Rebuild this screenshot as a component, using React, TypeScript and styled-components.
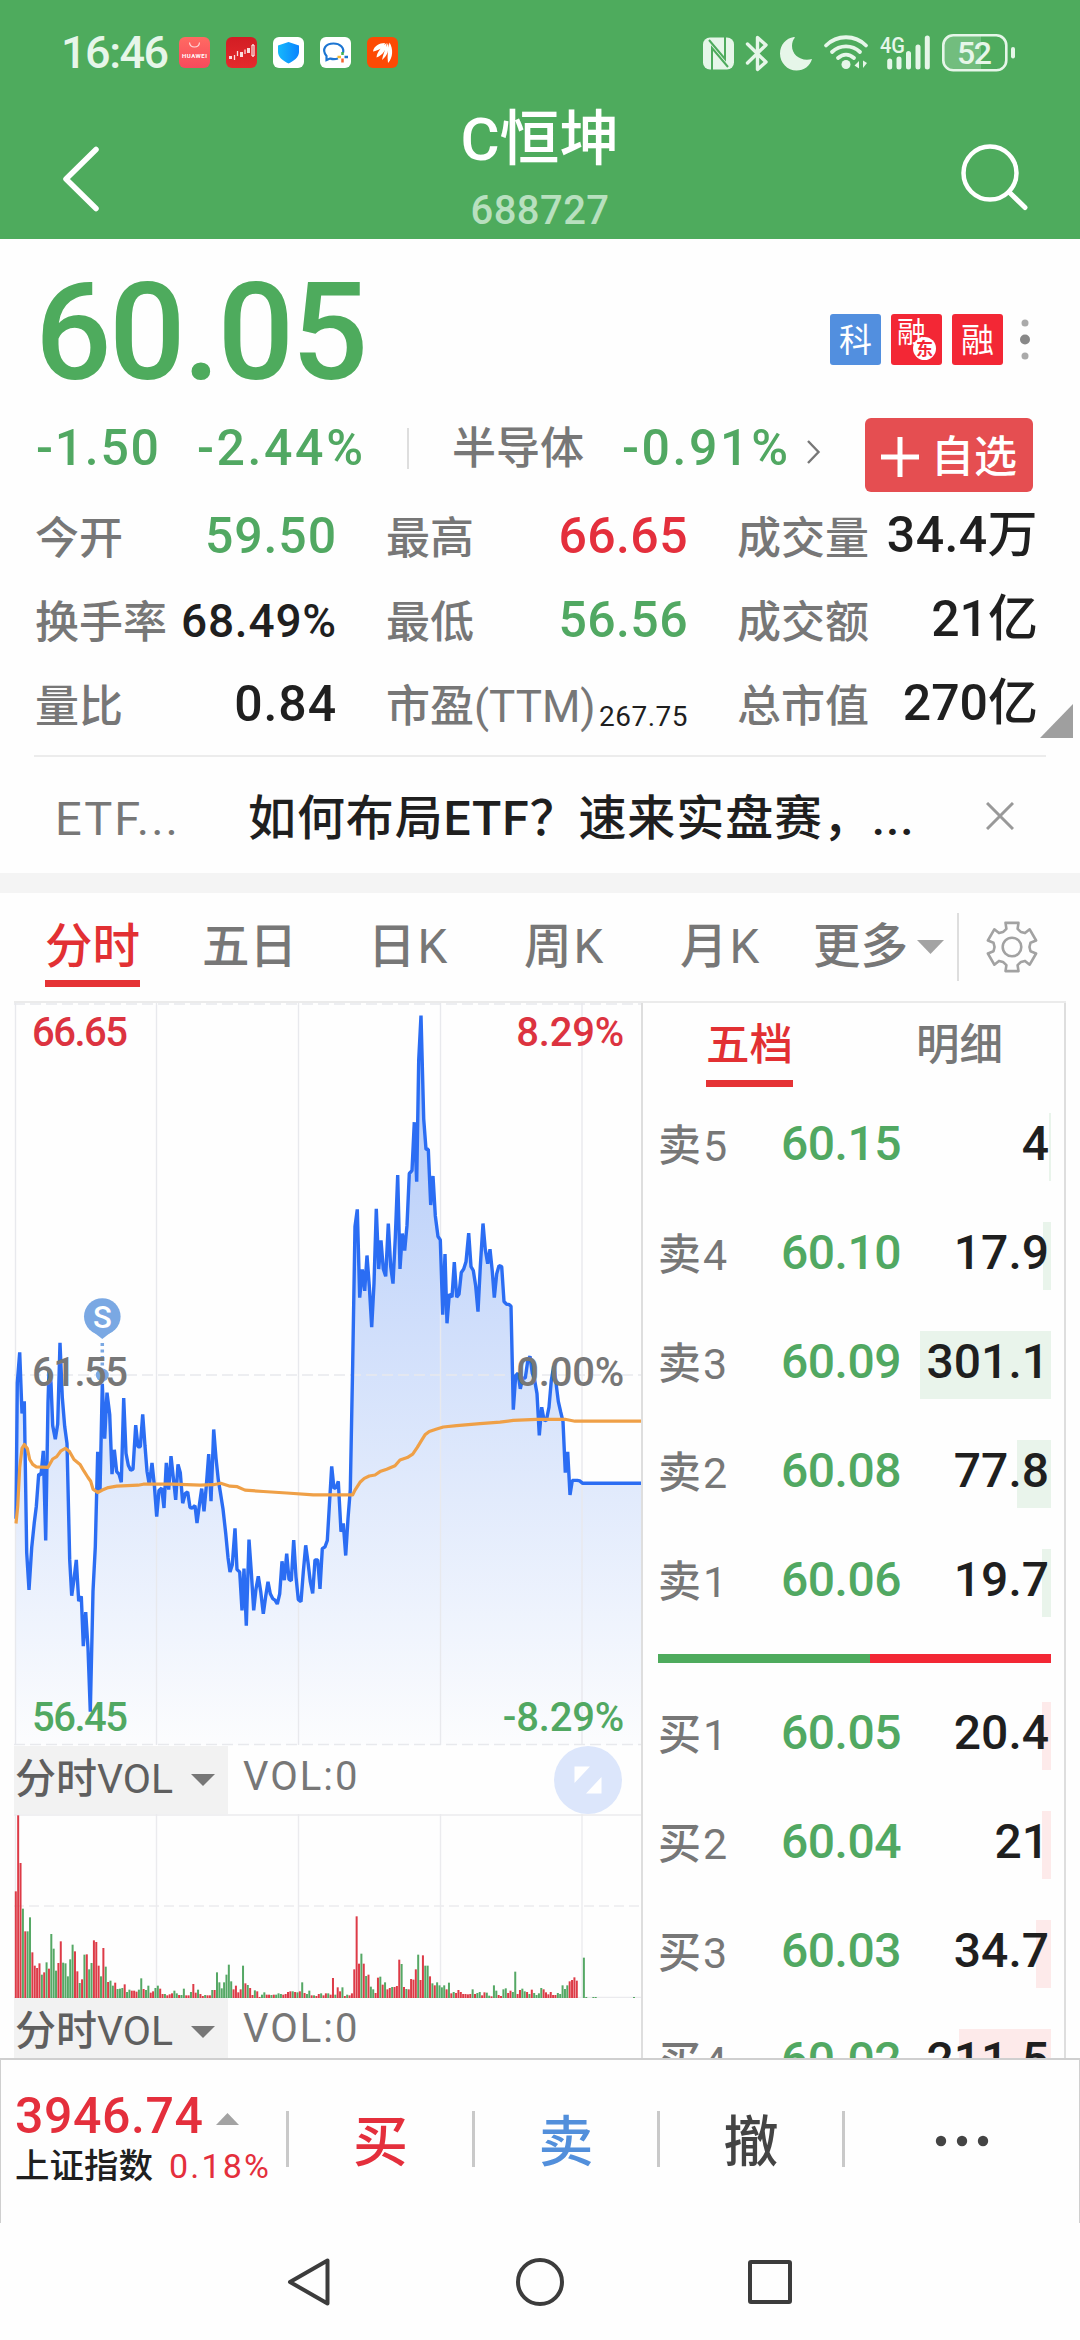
import React from "react";
import styled, { createGlobalStyle } from "styled-components";

const GREEN = "#4eab5d";
const UP = "#e42f3c";
const DOWN = "#51a862";
const GREY = "#777777";
const INK = "#1f1f1f";
const PALE = "#e6f6e9";

const Global = createGlobalStyle`
  *, *::before, *::after { box-sizing: border-box; }
  body {
    margin: 0;
    background: #fff;
    font-family: Roboto, "Noto Sans CJK SC", sans-serif;
    color: ${INK};
  }
  svg { display: block; flex: none; }
`;

const Screen = styled.div`
  width: 1080px;
  height: 2340px;
  overflow: hidden;
  display: flex;
  flex-direction: column;
  background: #fefefe;
`;

const Text = styled.span<{ size: number; color?: string; weight?: number; ls?: number; lift?: number }>`
  flex: none;
  display: block;
  white-space: nowrap;
  line-height: 1.2;
  font-size: ${(p) => p.size}px;
  color: ${(p) => p.color ?? INK};
  font-weight: ${(p) => p.weight ?? 500};
  letter-spacing: ${(p) => p.ls ?? 0}px;
  margin-bottom: ${(p) => (p.lift ?? 0) * 2}px;
`;

const Light = styled.i`
  font-style: normal;
  font-weight: 400;
  margin-left: 2px;
`;

/* ---------- header ---------- */

const Header = styled.header`
  flex: none;
  height: 239px;
  background: ${GREEN};
`;

const StatusBar = styled.div`
  display: flex;
  height: 105px;
  padding: 0 65px 0 61px;
  justify-content: space-between;
  align-items: center;
`;

const StatusSide = styled.div<{ gap: number }>`
  display: flex;
  align-items: center;
  gap: ${(p) => p.gap}px;
`;

const Clock = styled.span`
  width: 102px;
  margin-top: 1px;
  font-size: 45px;
  line-height: 50px;
  font-weight: 500;
  letter-spacing: -1.5px;
  white-space: nowrap;
  color: ${PALE};
`;

const AppBadge = styled.span<{ bg: string }>`
  display: flex;
  width: 31px;
  height: 31px;
  border-radius: 6px;
  background: ${(p) => p.bg};
  overflow: hidden;
`;

const TitleBar = styled.div`
  display: flex;
  height: 134px;
  padding: 0 52px 0 60px;
`;

const TitleBlock = styled.div`
  flex: 1;
  display: flex;
  flex-direction: column;
  align-items: center;
  padding: 1px 0 0 22px;
`;

const StockName = styled.h1`
  margin: 0;
  font-size: 60px;
  line-height: 68px;
  font-weight: 500;
  color: #fff;
`;

const StockCode = styled.div`
  margin-top: 14px;
  font-size: 40px;
  line-height: 46px;
  font-weight: 500;
  letter-spacing: 0.4px;
  color: #b8e0bf;
`;

/* ---------- quote ---------- */

const PriceRow = styled.div`
  flex: none;
  display: flex;
  height: 171px;
  padding: 15px 49px 0 35px;
  align-items: center;
`;

const Price = styled.div`
  flex: 1;
  font-size: 135px;
  line-height: 156px;
  font-weight: 500;
  letter-spacing: -2.8px;
  padding-top: 2px;
  color: ${GREEN};
`;

const Tag = styled.span<{ bg: string }>`
  position: relative;
  width: 51px;
  height: 51px;
  margin: 14px 10px 0 0;
  border-radius: 3px;
  background: ${(p) => p.bg};
  color: #fff;
  font-size: 33px;
  line-height: 53px;
  text-align: center;
`;

const SmallTag = styled(Tag)`
  font-size: 29px;
  line-height: 38px;
  text-align: left;
  padding-left: 6px;
`;

const TagSeal = styled.span`
  position: absolute;
  right: 6px;
  bottom: 5px;
  width: 23px;
  height: 23px;
  border-radius: 50%;
  background: #fff;
  color: #f32735;
  font-size: 17px;
  font-weight: 700;
  line-height: 24px;
  text-align: center;
`;

const ChangeRow = styled.div`
  flex: none;
  display: flex;
  align-items: center;
  height: 86px;
  padding: 0 47px 10px 36px;
`;

const Slot = styled.div<{ w: number }>`
  flex: none;
  display: flex;
  width: ${(p) => p.w}px;
`;

const ThinRule = styled.span<{ h: number }>`
  flex: none;
  width: 2px;
  height: ${(p) => p.h}px;
  background: #dedede;
`;

const WatchButton = styled.button`
  display: flex;
  flex: none;
  align-items: center;
  width: 168px;
  height: 74px;
  margin: 14px 0 0 auto;
  padding: 4px 0 0 16px;
  gap: 12px;
  border: 0;
  border-radius: 6px;
  background: #e54e51;
  color: #fff;
  font: 500 43px/50px Roboto, "Noto Sans CJK SC", sans-serif;
`;

const StatsWrap = styled.div`
  flex: none;
  display: flex;
  height: 259px;
  padding: 0 7px 0 35px;
`;

const Stats = styled.div`
  display: grid;
  grid-template-columns: 302px 302px 301px;
  grid-auto-rows: 84px;
  column-gap: 49px;
`;

const Stat = styled.div`
  display: flex;
  align-items: center;
  justify-content: space-between;
`;

const Corner = styled.span`
  align-self: flex-start;
  margin: 208px 0 0 auto;
  border-left: 33px solid transparent;
  border-bottom: 34px solid #9f9f9f;
`;

const Notice = styled.div`
  flex: none;
  display: flex;
  align-items: center;
  height: 118px;
  margin: 0 34px;
  padding: 8px 32px 0 21px;
  border-top: 2px solid #ececec;
`;

const Band = styled.div`
  flex: none;
  height: 20px;
  background: #f4f4f4;
`;

/* ---------- chart tabs ---------- */

const Tabs = styled.nav`
  flex: none;
  display: flex;
  height: 108px;
  padding-left: 45px;
`;

const Tab = styled.div<{ w: number; active?: boolean }>`
  flex: none;
  width: ${(p) => p.w}px;
  padding-top: 23px;
  font-size: 47.5px;
  line-height: 60px;
  font-weight: 500;
  color: ${(p) => (p.active ? "#e23033" : GREY)};
  > span {
    display: inline-flex;
    align-items: center;
    height: 71px;
    padding-bottom: 10px;
    box-shadow: ${(p) => (p.active ? "inset 0 -7px #e53335" : "none")};
  }
`;

/* ---------- main area ---------- */

const Main = styled.main`
  flex: none;
  display: flex;
  height: 1057px;
  margin: 0 14px;
  border-top: 2px solid #ebebeb;
  overflow: hidden;
`;

const ChartColumn = styled.section`
  flex: none;
  width: 629px;
  border-right: 2px solid #dedede;
`;

const ChartBox = styled.div`
  position: relative;
  height: 743px;
`;

const AxisLabel = styled.span<{ top: number; side: "left" | "right"; tone: string }>`
  position: absolute;
  top: ${(p) => p.top}px;
  ${(p) => (p.side === "left" ? "left: 18px" : "right: 17px")};
  font-size: 40px;
  line-height: 46px;
  font-weight: 500;
  letter-spacing: ${(p) => (p.side === "left" ? -1.5 : -0.2)}px;
  color: ${(p) => p.tone};
`;

const VolumeHead = styled.div`
  display: flex;
  height: 68px;
  color: ${GREY};
  font-size: 40px;
`;

const VolumePicker = styled.div`
  flex: none;
  display: flex;
  align-items: center;
  justify-content: space-between;
  width: 214px;
  padding: 0 13px 0 1px;
  background: #f2f2f2;
  color: #5f5f5f;
`;

const VolumeValue = styled.div`
  flex: 1;
  padding: 6px 0 0 15px;
  line-height: 50px;
  letter-spacing: 2px;
`;

const ExpandButton = styled.div`
  margin-right: 19px;
`;

const Book = styled.section`
  flex: 1;
  border-right: 2px solid #dedede;
  padding: 0 13px 0 15px;
`;

const BookTabs = styled.div`
  display: flex;
  height: 89px;
  padding: 14px 48px 0 48px;
  justify-content: space-between;
`;

const BookTab = styled.div<{ active?: boolean }>`
  height: 70px;
  padding-top: 3px;
  font-size: 43.5px;
  line-height: 52px;
  font-weight: 500;
  color: ${(p) => (p.active ? "#e23033" : GREY)};
  box-shadow: ${(p) => (p.active ? "inset 0 -7px #e53335" : "none")};
`;

const BookRow = styled.div`
  display: flex;
  align-items: center;
  height: 109px;
`;

const BookVolume = styled.div<{ bar: number; tone: string }>`
  flex: 1;
  height: 68px;
  padding-right: 2px;
  text-align: right;
  font-size: 48px;
  line-height: 62px;
  font-weight: 500;
  background: linear-gradient(${(p) => p.tone}, ${(p) => p.tone}) right / ${(p) => p.bar}px 100% no-repeat;
`;

const Balance = styled.div`
  display: flex;
  height: 9px;
  margin: 17px 0 18px;
  background: #f32735;
  &::before {
    content: "";
    width: 212px;
    background: ${GREEN};
  }
`;

/* ---------- bottom ---------- */

const TradeBar = styled.footer`
  flex: none;
  display: flex;
  height: 165px;
  border: 1px solid #cfcfcf;
  border-top-width: 2px;
  border-bottom: 0;
`;

const IndexBlock = styled.div`
  flex: none;
  width: 285px;
  padding: 26px 0 0 14px;
`;

const IndexLine = styled.div<{ gap: number }>`
  display: flex;
  align-items: center;
  gap: ${(p) => p.gap}px;
`;

const TradeAction = styled.div<{ tone: string; w: number }>`
  display: flex;
  flex: none;
  align-items: center;
  width: ${(p) => p.w}px;
  height: 56px;
  margin-top: 51px;
  padding-top: 6px;
  border-left: 3px solid #c9c9c9;
  justify-content: center;
  font-size: 55px;
  line-height: 56px;
  font-weight: 500;
  color: ${(p) => p.tone};
  svg { margin-top: -3px; }
`;

const SystemNav = styled.div`
  flex: none;
  display: flex;
  height: 117px;
  align-items: center;
  padding-left: 284px;
  gap: 181px;
`;

/* ---------- data ---------- */

const pricePath: number[][] = [
  [48,1070],[52,790],[59,727],[66,853],[73,828],[80,1140],[87,1217],[95,1130],[103,1078],[109,1045],[116,978],[123,980],[130,930],[137,1115],[144,830],[147,765],[153,790],[158,878],[166,906],[173,875],[180,707],[187,820],[194,880],[201,915],[209,1155],[215,1229],[222,1195],[229,1155],[236,1240],[244,1230],[250,1333],[257,1263],[264,1337],[271,1468],[279,1220],[286,1128],[293,932],[300,1015],[307,792],[314,905],[321,810],[329,855],[336,978],[343,928],[350,973],[357,978],[364,995],[371,821],[378,935],[385,960],[392,970],[399,968],[407,877],[414,922],[421,922],[428,855],[435,920],[441,972],[448,1000],[456,955],[463,1000],[470,1066],[477,1012],[485,1007],[492,1048],[499,955],[506,1010],[513,941],[520,985],[527,1031],[534,958],[541,975],[548,1038],[556,1018],[563,1015],[570,1047],[577,1048],[585,1043],[591,1079],[598,1043],[605,1008],[612,1055],[619,1003],[626,937],[633,1034],[641,886],[648,945],[655,990],[662,1020],[669,1050],[677,1100],[684,1150],[690,1180],[697,1165],[705,1090],[711,1175],[719,1180],[726,1259],[732,1173],[739,1291],[747,1113],[754,1180],[761,1259],[768,1215],[775,1189],[782,1220],[790,1266],[797,1230],[804,1200],[811,1225],[818,1235],[825,1238],[832,1246],[839,1225],[846,1158],[853,1197],[860,1142],[867,1195],[874,1198],[881,1114],[888,1190],[895,1237],[903,1241],[910,1180],[917,1125],[924,1160],[931,1200],[938,1224],[945,1155],[953,1155],[960,1215],
  [967,1132],[975,1128],[982,1115],[988,1045],[995,962],[1002,1008],[1009,1005],[1015,993],[1023,1097],[1030,1080],[1037,1146],[1044,1070],[1051,1010],[1058,750],[1065,467],[1072,432],[1079,614],[1087,556],[1094,600],[1101,527],[1108,590],[1115,675],[1122,585],[1129,431],[1136,555],[1143,496],[1150,555],[1157,570],[1165,461],[1172,550],[1179,585],[1186,490],[1193,361],[1200,555],[1207,482],[1214,517],[1221,465],[1228,358],[1236,352],[1243,252],[1250,375],[1256,125],[1263,32],[1271,245],[1278,308],[1285,308],[1292,423],[1299,363],[1306,445],[1314,488],[1321,495],[1328,649],[1335,524],[1341,667],[1348,607],[1356,613],[1363,541],[1370,613],[1377,607],[1384,562],[1391,555],[1398,540],[1406,481],[1413,550],[1420,558],[1427,590],[1434,643],[1441,550],[1449,461],[1456,515],[1463,544],[1470,514],[1477,560],[1483,614],[1490,565],[1497,548],[1505,550],[1512,622],[1520,628],[1527,628],[1533,632],[1540,845],[1547,775],[1554,770],[1561,802],[1568,780],[1576,780],[1583,745],[1590,735],[1597,770],[1604,785],[1611,812],[1618,898],[1625,840],[1632,866],[1639,868],[1647,840],[1654,785],[1661,755],[1668,790],[1675,828],[1682,850],[1689,870],[1696,975],[1703,932],[1710,1021],[1717,991],[1732,991],[1739,992],[1748,997],[1923,997],
];

const averagePath: number[][] = [
  [48,1080],[53,1045],[59,965],[66,925],[73,917],[82,925],[89,948],[98,958],[109,963],[144,964],[158,947],[170,942],[183,930],[196,925],[208,931],[222,948],[240,958],[252,972],[264,985],[272,993],[279,1009],[293,1016],[307,1011],[325,1006],[350,1003],[414,1001],[430,999],[520,999],[600,1001],[640,1000],[662,997],[690,1003],[712,1004],[735,1011],[790,1014],[860,1017],[940,1021],[990,1021],[1058,1021],[1065,1011],[1080,995],[1093,987],[1108,982],[1125,980],[1140,973],[1160,968],[1185,961],[1200,949],[1222,944],[1238,937],[1252,923],[1265,908],[1275,897],[1288,890],[1310,885],[1330,881],[1370,878],[1440,874],[1500,871],[1540,867],[1610,865],[1695,865],[1725,869],[1923,869],
];

/* one entry per minute: bar height in thirds of a pixel, then r (rise) or g (fall) */
const volume =
  "320r 548r 405r 268g 200r 200g 242g 137r 97r 90r 104r 70g 77r 107g 88r 192g 148g 82g 105r 170r 106g 104g 65g 116g 160g 140r 80r 45g 56r 130g 131r 86g 105g 173r 168r 97r 65g 150r 94g 48r 52g 37g 46r 27g 28g 30g 41r 18g 25g 22r 22r 19r 25g 59g 27r 24g 37g 16r 20r 30g 37g 28r 12r 12g 8r 11r 14r 22g 14g 9r 9g 28g 8r 8r 18g 42r 16r 25g 12r 6r 9g 8r 8r 24g 24r 77g 47g 29g 47g 70g 100g 50g 26r 37r 17r 26r 97g 44r 39g 30r 9r 23g 20r 3r 10g 17g 10r 10r 9g 10r 10g 14g 12g 10r 12r 18r 20r 20g 18r 17g 20r 47g 15r 12g 22g 8r 8g 6r 12r 14g 8r 14r 14g 10r 60r 10g 32r 20r 32g 6r 10g 8r 14r 86r 245r 103r 133g 103r 66g 70r 34g 26g 15r 61r 64g 40r 47g 26r 30r 33g 33r 36r 115r 102g 33r 27g 26r 57r 55r 86r 130g 54r 128r 97g 97g 65r 44g 38r 47g 38g 32g 38g 26r 46g 14r 18g 15r 24r 18r 12r 12r 11r 12r 26g 12r 15g 18g 8r 17r 16g 7g 5r 38g 22g 9r 6r 26g 29g 15r 22r 18g 79g 12r 24r 28g 20g 18r 12g 25r 15g 9g 14g 30g 26r 17r 11r 18r 9r 9r 15g 12g 38g 27g 38g 50r 54r 62r 52r 0g 0g 121g 3g 0g 0g 3g 3g"
    .split(" ")
    .map((t) => ({ h: parseInt(t, 10) / 3, up: t.endsWith("r") }));

const toPoints = (rows: number[][]) =>
  rows.map(([x, y]) => `${(x / 3 - 14).toFixed(1)},${(y / 2.063 - 3).toFixed(1)}`).join(" ");

const GRID_X = [1.5, 142.5, 284.5, 426.5, 568];

const gearPoints = Array.from({ length: 6 }, (_, k) =>
  [[-29, 17.5], [-17, 19], [-15, 25], [15, 25], [17, 19], [29, 17.5]].map(([a, r]) => {
    const t = ((k * 60 + a - 90) * Math.PI) / 180;
    return `${(27 + r * Math.cos(t)).toFixed(1)},${(27 + r * Math.sin(t)).toFixed(1)}`;
  }),
).flat().join(" ");

const sells = [
  ["卖5", "60.15", "4", 2],
  ["卖4", "60.10", "17.9", 8],
  ["卖3", "60.09", "301.1", 131],
  ["卖2", "60.08", "77.8", 34],
  ["卖1", "60.06", "19.7", 9],
] as const;

const buys = [
  ["买1", "60.05", "20.4", 9],
  ["买2", "60.04", "21", 9],
  ["买3", "60.03", "34.7", 15],
  ["买4", "60.02", "211.5", 92],
] as const;

/* ---------- parts ---------- */

const StatusIcons = () => (
  <svg width="313" height="40" viewBox="702 32 313 40" fill="none" stroke={PALE} strokeLinecap="round">
    <rect x="703" y="36.5" width="31" height="32" rx="7" fill={PALE} stroke="none" />
    <path d="M712 69V47L728 66M725 36V58L709 39" stroke={GREEN} strokeWidth="2" strokeLinecap="butt" />
    <path d="M747.5 43L766 61L757.5 68.5V36.5L766 44L747.5 62" strokeWidth="3.4" strokeLinejoin="round" />
    <path d="M794 36C786 37 780 44 780 52.5C780 62 787.500 69.500 796.500 69.500C804 69.500 810 65 812 58C801 61 792 54 792 45C792 41.500 793 38.500 795 36.500Z" fill={PALE} stroke="none" />
    <path d="M826 44.500C837 33.500 855 33.500 866 44.500M832 51C840 43.500 852 43.500 860 51M838 57C843 52.500 849 52.500 854 57" strokeWidth="3.800" />
    <circle cx="846" cy="63.500" r="4.500" fill={PALE} stroke="none" />
    <path d="M859 60V67.500L854.500 64.500ZM863 59.500V67L867 62Z" fill={PALE} stroke="none" />
    <text x="880" y="51.500" fill={PALE} stroke="none" fontFamily="Roboto, sans-serif" fontWeight="500" fontSize="22" textLength="25" lengthAdjust="spacingAndGlyphs">4G</text>
    <path d="M889.700 60V66M899 58V66M908.500 52.500V66M918 46V66M927.300 37V66" strokeWidth="5" />
    <path d="M944 45A10 10 0 0 1 954 35H981V69H954A10 10 0 0 1 944 59Z" fill={PALE} fillOpacity="0.24" stroke="none" />
    <rect x="943.300" y="34.300" width="63" height="35" rx="10" strokeWidth="2.600" />
    <path d="M1013 48V55.500" strokeWidth="4" />
    <text x="957" y="63" fill={PALE} stroke="none" fontFamily="Roboto, sans-serif" fontWeight="500" fontSize="32" textLength="35">52</text>
  </svg>
);

const AppBadges = () => (
  <>
    <AppBadge bg="linear-gradient(#ff6a62, #f74a5c)">
      <svg width="31" height="31" viewBox="0 0 31 31">
        <path d="M10.500 5.500C11 11.500 20 11.500 20.500 5.500" fill="none" stroke="#ffd9d9" strokeWidth="1.200" />
        <text x="15.500" y="20.500" fill="#fff" fontFamily="Roboto, sans-serif" fontWeight="700" fontSize="6" textAnchor="middle" textLength="25">HUAWEI</text>
      </svg>
    </AppBadge>
    <AppBadge bg="linear-gradient(#d21d24, #e52a2c)">
      <svg width="31" height="31" viewBox="0 0 31 31" fill="#fbdede">
        <path d="M3 19H6V22H3ZM14 15H17V20H14ZM21 11H24V16H21Z" />
        <path d="M8.500 18V23M11.500 14V19M19 12.500V17M26 8V19M28 8V19M26 8H28M26 19H28" stroke="#fbdede" strokeWidth="1.300" />
      </svg>
    </AppBadge>
    <AppBadge bg="#fff">
      <svg width="31" height="31" viewBox="0 0 31 31">
        <defs>
          <linearGradient id="shield" x1="0" x2="1">
            <stop offset="0" stopColor="#16b8fb" />
            <stop offset="1" stopColor="#0a84ff" />
          </linearGradient>
        </defs>
        <path d="M15.500 5L26 8.500V15C26 20 21 24 15.500 26.500C10 24 5 20 5 15V8.500Z" fill="url(#shield)" />
      </svg>
    </AppBadge>
    <AppBadge bg="#fff">
      <svg width="31" height="31" viewBox="0 0 31 31" fill="none">
        <path d="M18 21.500C13 23 10.500 21.500 10 21.500L6.500 23V19C1 12 6 6.500 13.500 6.500C20 6.500 24.500 10.500 23 16" stroke="#1c75d2" strokeWidth="2.200" />
        <path d="M22.500 15V18" stroke="#3eb058" strokeWidth="2.500" />
        <path d="M24.500 20H28" stroke="#1c75d2" strokeWidth="2.500" />
        <path d="M22.500 21.500V25.500" stroke="#f5632f" strokeWidth="2.500" />
        <path d="M17.500 20H21" stroke="#f7b92d" strokeWidth="2.500" />
      </svg>
    </AppBadge>
    <AppBadge bg="#fd4a04">
      <svg width="31" height="31" viewBox="0 0 31 31" fill="#fff">
        <path d="M6 14.500C7 9 12 6 18 6C17 10 12 13.500 6 14.500ZM9.500 20.500C10 15 14 10.500 19.500 6C20 12 16 18 9.500 20.500ZM15 23C16 18 18 12 21 6C22.500 12 20.500 19 15 23ZM21 26C20 19 21 12 22.500 5.500C26.500 12 26 21 21 26Z" />
      </svg>
    </AppBadge>
  </>
);

const PriceChart = () => (
  <ChartBox>
    <svg width="627" height="743" viewBox="0 0 627 743">
      <defs>
        <linearGradient id="area" gradientUnits="userSpaceOnUse" x1="0" y1="0" x2="0" y2="742">
          <stop offset="0" stopColor="#2a6df0" stopOpacity="0.38" />
          <stop offset="1" stopColor="#2a6df0" stopOpacity="0.01" />
        </linearGradient>
      </defs>
      <polygon points={`2,742 ${toPoints(pricePath)} 627,742`} fill="url(#area)" />
      <g stroke="#e8e9ed" strokeWidth="1.400" fill="none">
        {GRID_X.map((x) => <path key={x} d={`M${x} 0V742`} />)}
        <path d="M0 1H627M0 372H627M0 741.500H627" strokeDasharray="11 5" />
      </g>
      <polyline points={toPoints(pricePath)} fill="none" stroke="#2b6df3" strokeWidth="3.400" strokeLinejoin="bevel" />
      <polyline points={toPoints(averagePath)} fill="none" stroke="#efa047" strokeWidth="3.200" strokeLinejoin="round" />
      <g fill="#7aa8e3">
        <circle cx="88.300" cy="313.500" r="18.300" />
        <path d="M78 328L88.300 336L98.600 328Z" />
        <circle cx="88.300" cy="372" r="6.500" />
        <path d="M88.300 340V368" stroke="#7aa8e3" strokeWidth="3.500" strokeDasharray="3 3.500" />
        <text x="88.300" y="324.500" textAnchor="middle" fill="#fff" fontFamily="Roboto, sans-serif" fontWeight="500" fontSize="31">S</text>
      </g>
    </svg>
    <AxisLabel top={7} side="left" tone="#dc3340">66.65</AxisLabel>
    <AxisLabel top={7} side="right" tone="#dc3340">8.29%</AxisLabel>
    <AxisLabel top={347} side="left" tone={GREY}>61.55</AxisLabel>
    <AxisLabel top={347} side="right" tone={GREY}>0.00%</AxisLabel>
    <AxisLabel top={692} side="left" tone={DOWN}>56.45</AxisLabel>
    <AxisLabel top={692} side="right" tone={DOWN}>-8.29%</AxisLabel>
  </ChartBox>
);

const VolumeChart = () => (
  <svg width="627" height="184" viewBox="0 0 627 184">
    <g stroke="#ebebee" strokeWidth="1.400" fill="none">
      {GRID_X.map((x) => <path key={x} d={`M${x} 0V184`} />)}
      <path d="M0 1H627M0 183.500H627" />
      <path d="M0 92H627" strokeDasharray="10 5" />
    </g>
    {volume.map((v, i) => (
      <rect key={i} x={0.8 + i * 2.367} y={184 - v.h} width="2" height={v.h} fill={v.up ? "#dd3b47" : "#55a865"} />
    ))}
    <path d="M619 183.500H621" stroke="#55a865" />
  </svg>
);

const VolumeTitle = ({ expand }: { expand?: boolean }) => (
  <VolumeHead>
    <VolumePicker>
      <Text size={41} color="#5f5f5f" weight={500}>分时<Light style={{ marginLeft: 0 }}>VOL</Light></Text>
      <svg width="24" height="12"><path d="M0 0H24L12 12Z" fill="#777" /></svg>
    </VolumePicker>
    <VolumeValue>VOL:0</VolumeValue>
    {expand && (
      <ExpandButton>
        <svg width="68" height="68" viewBox="0 0 68 68">
          <circle cx="34" cy="34" r="34" fill="#dce6fb" />
          <path d="M20.500 20.500H36L20.500 37ZM47.500 31V47.500H32Z" fill="#fff" />
        </svg>
      </ExpandButton>
    )}
  </VolumeHead>
);

const BookLine = ({ row, tone }: { row: readonly [string, string, string, number]; tone: string }) => (
  <BookRow>
    <Slot w={123}>
      <Text size={43} color={GREY}>{row[0][0]}<Light>{row[0][1]}</Light></Text>
    </Slot>
    <Slot w={127}><Text size={48} color={DOWN} ls={-0.5} lift={3}>{row[1]}</Text></Slot>
    <BookVolume bar={row[3]} tone={tone}>{row[2]}</BookVolume>
  </BookRow>
);

const StatItem = ({ label, latin, value, color, size = 50, ls = 0.9, lift = 2, weight }: {
  label: string; latin?: string; value: string; color?: string; size?: number; ls?: number; lift?: number; weight?: number;
}) => (
  <Stat>
    <Text size={44} color={GREY} lift={-1.5}>
      {label}
      {latin && <Light style={{ marginLeft: 0 }}>{latin}</Light>}
    </Text>
    <Text size={size} color={color} ls={ls} lift={lift} weight={weight}>{value}</Text>
  </Stat>
);

export default function App() {
  return (
    <Screen>
      <Global />
      <Header>
        <StatusBar>
          <StatusSide gap={16}>
            <Clock>16:46</Clock>
            <AppBadges />
          </StatusSide>
          <StatusIcons />
        </StatusBar>
        <TitleBar>
          <svg width="40" height="134" viewBox="0 0 40 134">
            <path d="M36 44.500L6 74L36 103.500" fill="none" stroke="#fff" strokeWidth="5.500" strokeLinecap="round" strokeLinejoin="round" />
          </svg>
          <TitleBlock>
            <StockName>C恒坤</StockName>
            <StockCode>688727</StockCode>
          </TitleBlock>
          <svg width="70" height="134" viewBox="0 0 70 134" fill="none" stroke="#fff" strokeLinecap="round">
            <circle cx="32" cy="68" r="26.500" strokeWidth="4.500" />
            <path d="M51 87L67 102.500" strokeWidth="5" />
          </svg>
        </TitleBar>
      </Header>

      <PriceRow>
        <Price>60.05</Price>
        <Tag bg="#528fdf">科</Tag>
        <SmallTag bg="#f32735">融<TagSeal>东</TagSeal></SmallTag>
        <Tag bg="#f32735">融</Tag>
        <svg width="18" height="51" viewBox="0 0 18 51" style={{ marginTop: 14 }}>
          <circle cx="12" cy="9" r="3.500" fill="#aaa" />
          <circle cx="12" cy="25.500" r="5" fill="#888" />
          <circle cx="12" cy="42" r="3.500" fill="#aaa" />
        </svg>
      </PriceRow>

      <ChangeRow>
        <Slot w={161}><Text size={50} color={DOWN} ls={1.7}>-1.50</Text></Slot>
        <Slot w={210}><Text size={50} color={DOWN} ls={2.6}>-2.44%</Text></Slot>
        <ThinRule h={41} />
        <Slot w={213}><Text size={44} color={GREY} lift={-1.5} style={{ marginLeft: 43 }}>半导体</Text></Slot>
        <Slot w={184}><Text size={50} color={DOWN} ls={2.6}>-0.91%</Text></Slot>
        <svg width="16" height="26" viewBox="0 0 16 26" style={{ marginTop: 8 }}>
          <path d="M2 2L12.500 13L2 24" fill="none" stroke="#777" strokeWidth="2.400" />
        </svg>
        <WatchButton>
          <svg width="38" height="40"><path d="M0 20H38M19 0V40" stroke="#fff" strokeWidth="5" /></svg>
          自选
        </WatchButton>
      </ChangeRow>

      <StatsWrap>
        <Stats>
          <StatItem label="今开" value="59.50" color={DOWN} />
          <StatItem label="最高" value="66.65" color={UP} ls={0.4} />
          <StatItem label="成交量" value="34.4万" ls={0.4} lift={3} />
          <StatItem label="换手率" value="68.49%" size={46} ls={0.8} lift={0} />
          <StatItem label="最低" value="56.56" color={DOWN} ls={0.4} />
          <StatItem label="成交额" value="21亿" ls={0} lift={3} />
          <StatItem label="量比" value="0.84" />
          <StatItem label="市盈" latin="(TTM)" value="267.75" size={28} ls={0.5} lift={-11} weight={400} />
          <StatItem label="总市值" value="270亿" ls={0} lift={3} />
        </Stats>
        <Corner />
      </StatsWrap>

      <Notice>
        <Slot w={193}><Text size={47} color={GREY} weight={400} ls={2}>ETF...</Text></Slot>
        <Text size={48} ls={0.9}>如何布局ETF？速来实盘赛，...</Text>
        <svg width="28" height="28" viewBox="0 0 28 28" style={{ margin: "-7px 0 0 auto" }}>
          <path d="M1 1L27 27M27 1L1 27" stroke="#999" strokeWidth="3" />
        </svg>
      </Notice>
      <Band />

      <Tabs>
        <Tab w={157} active><span>分时</span></Tab>
        <Tab w={166}><span>五日</span></Tab>
        <Tab w={156}><span>日<Light>K</Light></span></Tab>
        <Tab w={156}><span>周<Light>K</Light></span></Tab>
        <Tab w={133}><span>月<Light>K</Light></span></Tab>
        <Tab w={144}>
          <span>
            更多
            <svg width="27" height="14" style={{ marginLeft: 9 }}><path d="M0 0H27L13.500 14Z" fill="#a3a3a3" /></svg>
          </span>
        </Tab>
        <ThinRule h={68} style={{ marginTop: 20 }} />
        <svg width="54" height="54" viewBox="0 0 54 54" fill="none" stroke="#a2a2a2" strokeWidth="2.600" strokeLinejoin="round" style={{ margin: "27px 0 0 26px" }}>
          <polygon points={gearPoints} />
          <circle cx="27" cy="27" r="9.300" />
        </svg>
      </Tabs>

      <Main>
        <ChartColumn>
          <PriceChart />
          <VolumeTitle expand />
          <VolumeChart />
          <VolumeTitle />
        </ChartColumn>
        <Book>
          <BookTabs>
            <BookTab active>五档</BookTab>
            <BookTab>明细</BookTab>
          </BookTabs>
          {sells.map((r) => <BookLine key={r[0]} row={r} tone="#e9f4eb" />)}
          <Balance />
          {buys.map((r) => <BookLine key={r[0]} row={r} tone="#fdeaea" />)}
        </Book>
      </Main>

      <TradeBar>
        <IndexBlock>
          <IndexLine gap={12}>
            <Text size={50} color={UP} ls={0.6}>3946.74</Text>
            <svg width="23" height="12" style={{ marginTop: 6 }}><path d="M0 12H23L11.500 0Z" fill="#a3a3a3" /></svg>
          </IndexLine>
          <IndexLine gap={16}>
            <Text size={34.5}>上证指数</Text>
            <Text size={34} color={UP} weight={400} ls={2.2}>0.18%</Text>
          </IndexLine>
        </IndexBlock>
        <TradeAction tone={UP} w={186}>买</TradeAction>
        <TradeAction tone="#528fdb" w={185}>卖</TradeAction>
        <TradeAction tone="#444" w={185}>撤</TradeAction>
        <TradeAction tone="#444" w={236}>
          <svg width="54" height="12" viewBox="0 0 54 12" fill="#444">
            <circle cx="6" cy="6" r="5.200" /><circle cx="27" cy="6" r="5.200" /><circle cx="48" cy="6" r="5.200" />
          </svg>
        </TradeAction>
      </TradeBar>

      <SystemNav>
        <svg width="50" height="50" viewBox="0 0 50 50" fill="none" stroke="#3c3c3c" strokeWidth="4" strokeLinejoin="round">
          <path d="M43.500 3.500V46.500L6 25Z" />
        </svg>
        <svg width="50" height="50" viewBox="0 0 50 50" fill="none" stroke="#3c3c3c" strokeWidth="4">
          <circle cx="25" cy="25" r="22" />
        </svg>
        <svg width="50" height="50" viewBox="0 0 50 50" fill="none" stroke="#3c3c3c" strokeWidth="4">
          <rect x="4" y="5" width="40" height="40" rx="1" />
        </svg>
      </SystemNav>
    </Screen>
  );
}
